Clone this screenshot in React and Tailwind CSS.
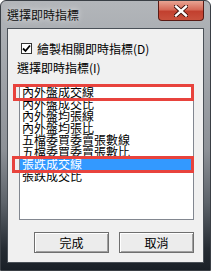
import React from "react";

const font = { fontFamily: '"Noto Sans CJK TC", "Noto Sans", sans-serif' };

const items = [
  "內外盤成交線",
  "內外盤成交比",
  "內外盤均張線",
  "內外盤均張比",
  "五檔委買委賣張數線",
  "五檔委買委賣張數比",
  "張跌成交線",
  "張跌成交比",
];

export default function App() {
  return (
    <div
      className="relative w-[211px] h-[271px] overflow-hidden rounded-t-[6px] border border-[#3a3f45] flex flex-col bg-[linear-gradient(to_bottom,#b3b6ba_0%,#a2a6ab_25%,#8d9197_55%,#5d636a_75%,#262c33_92%,#1a2027_100%)]"
      style={font}
    >
      {/* title bar */}
      <div className="h-[27px] flex items-start shrink-0">
        <div className="pl-[6px] pt-[7px] text-[12px] leading-[14px] text-[#111] [text-shadow:0_0_6px_rgba(255,255,255,0.8)]">
          選擇即時指標
        </div>
        <div className="ml-auto mr-[6px] w-[46px] h-[20px] rounded-b-[4px] border border-t-0 border-[#5a1a14] bg-[linear-gradient(to_bottom,#e8a493_0%,#d66a58_45%,#c2402f_55%,#c9513d_100%)] flex items-center justify-center">
          <svg width="14" height="12" viewBox="0 0 14 12">
            <path d="M2 1.5 L12 10.5 M12 1.5 L2 10.5" stroke="#3a0f0a" strokeWidth="4.2" strokeLinecap="square" />
            <path d="M2 1.5 L12 10.5 M12 1.5 L2 10.5" stroke="#ffffff" strokeWidth="2.4" strokeLinecap="square" />
          </svg>
        </div>
      </div>

      {/* client area */}
      <div className="ml-[6px] w-[197px] h-[235px] border border-[#4a5057] bg-[#f0f0f0] flex flex-col shrink-0">
        {/* checkbox row */}
        <div className="mt-[14px] pl-[13px] flex items-center h-[11px]">
          <div className="w-[11px] h-[11px] border border-[#333] bg-white flex items-center justify-center">
            <svg width="9" height="9" viewBox="0 0 9 9">
              <path d="M1 4.5 L3.5 7 L8 1.5" stroke="#000" strokeWidth="1.8" fill="none" />
            </svg>
          </div>
          <span className="ml-[5px] text-[12px] leading-[12px] text-black whitespace-nowrap">
            繪製相關即時指標(D)
          </span>
        </div>

        {/* label */}
        <div className="mt-[7px] pl-[9px] text-[12px] leading-[14px] text-black whitespace-nowrap">
          選擇即時指標(I)
        </div>

        {/* list */}
        <div className="mt-[9px] ml-[11px] w-[175px] h-[136px] border border-[#828790] bg-white pt-[1px] overflow-hidden">
          {items.map((t, i) => (
            <div
              key={i}
              className={
                i === 6
                  ? "h-[12px] pl-[2px] text-[12px] leading-[12px] whitespace-nowrap bg-[#3399ff] text-white"
                  : "h-[12px] pl-[2px] text-[12px] leading-[12px] whitespace-nowrap text-black"
              }
            >
              {t}
            </div>
          ))}
        </div>

        {/* buttons */}
        <div className="mt-[12px] ml-[26px] flex gap-[10px]">
          <div className="w-[75px] h-[21px] border border-[#6f6f6f] bg-[#ececec] shadow-[inset_1px_1px_0_#ffffff,inset_-1px_-1px_0_#a0a0a0] flex items-center justify-center text-[12px] leading-[12px] text-black">
            完成
          </div>
          <div className="w-[75px] h-[21px] border border-[#6f6f6f] bg-[#ececec] shadow-[inset_1px_1px_0_#ffffff,inset_-1px_-1px_0_#a0a0a0] flex items-center justify-center text-[12px] leading-[12px] text-black">
            取消
          </div>
        </div>
      </div>

      {/* red annotation boxes */}
      <div className="absolute left-[12px] top-[83px] w-[181px] h-[17px] border-[3px] border-[#e8433d] pointer-events-none" />
      <div className="absolute left-[11px] top-[155px] w-[182px] h-[17px] border-[3px] border-[#e8433d] pointer-events-none" />
    </div>
  );
}
